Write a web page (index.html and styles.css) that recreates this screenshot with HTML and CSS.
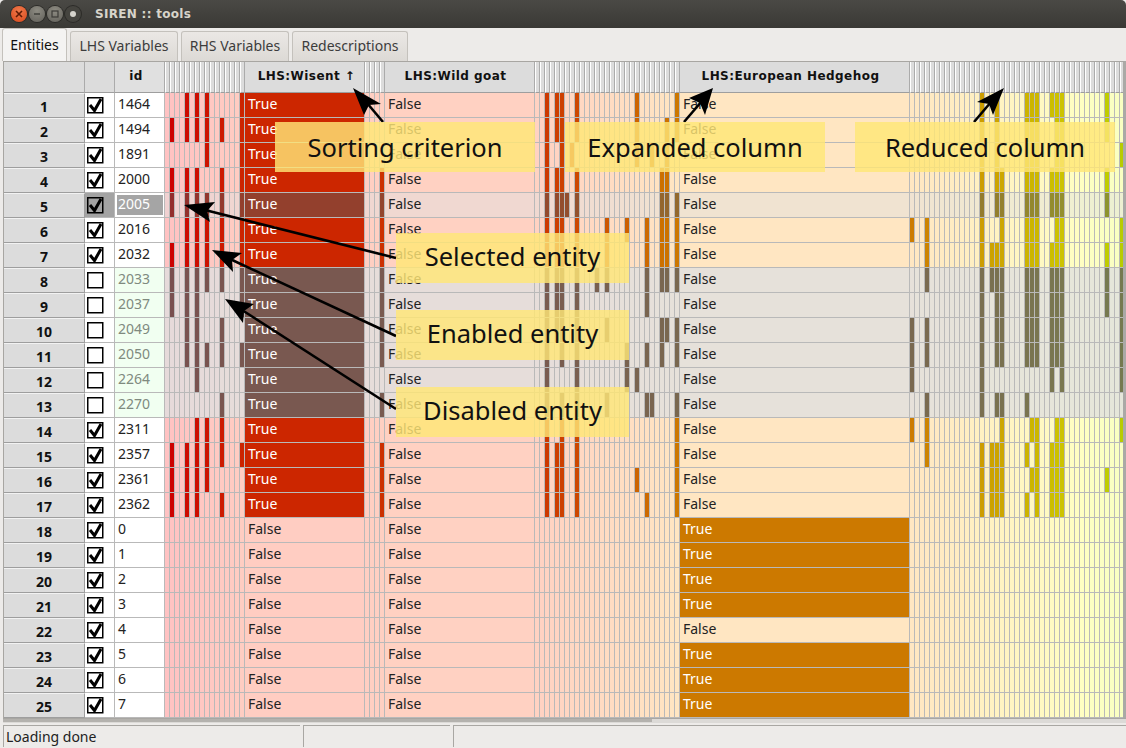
FILE: index.html
```html
<!DOCTYPE html>
<html>
<head>
    <meta charset="UTF-8">
    <title>SIREN :: tools</title>
    <link rel="stylesheet" href="styles.css">
</head>
<body>
    <div class="titlebar">
        <div class="winbtn close"><svg width="8" height="8" viewBox="0 0 8 8"><path d="M1 1L7 7M7 1L1 7" stroke="#5e1a05" stroke-width="1.6"/></svg></div>
        <div class="winbtn"><svg width="8" height="8" viewBox="0 0 8 8"><path d="M1 4H7" stroke="#3c3b37" stroke-width="1.4"/></svg></div>
        <div class="winbtn"><svg width="8" height="8" viewBox="0 0 8 8"><rect x="1" y="1" width="6" height="6" fill="none" stroke="#3c3b37" stroke-width="1.2"/></svg></div>
        <div class="winbtn sticky"><span></span></div>
        <div class="wintitle">SIREN :: tools</div>
    </div>

    <div class="tabs">
        <div class="tab active">Entities</div>
        <div class="tab">LHS Variables</div>
        <div class="tab">RHS Variables</div>
        <div class="tab">Redescriptions</div>
    </div>

    <div class="pane">
        <div class="grid" id="grid"></div>
    </div>
    <div class="hscroll"><div class="hthumb"></div></div>

    <div class="statusbar">
        <div class="statuscell first">Loading done</div>
        <div class="statuscell second"></div>
        <div class="statuscell third"></div>
    </div>

    <!-- annotations drawn over the screenshot -->
    <svg class="arrows" width="1126" height="748" viewBox="0 0 1126 748">
        <g stroke="#000" stroke-width="2.6">
            <line x1="383" y1="122" x2="367" y2="103"/>
            <line x1="684" y1="122" x2="702" y2="101"/>
            <line x1="974" y1="122" x2="991" y2="102"/>
            <line x1="396" y1="258" x2="205" y2="210"/>
            <line x1="396" y1="336" x2="230" y2="259"/>
            <line x1="396" y1="409" x2="242" y2="310"/>
        </g>
        <polygon points="353,88 381,104 369,105 364,115"/>
        <polygon points="713,88 705,115 700,103 689,98"/>
        <polygon points="1004,88 993,115 989,104 977,102"/>
        <polygon points="184,205 215,202 207,211 210,222"/>
        <polygon points="212,250 242,253 232,260 233,272"/>
        <polygon points="225,299 254,304 244,311 243,323"/>
    </svg>
    <div class="note sorting">Sorting criterion</div>
    <div class="note expanded">Expanded column</div>
    <div class="note reduced">Reduced column</div>
    <div class="note selected">Selected entity</div>
    <div class="note enabled">Enabled entity</div>
    <div class="note disabled">Disabled entity</div>

    <script src="script.js"></script>
</body>
</html>
```

FILE: styles.css
```css
* {
    box-sizing: border-box;
}
html, body {
    margin: 0;
    height: 100%;
    overflow: hidden;
}
body {
    width: 1126px;
    height: 748px;
    display: flex;
    flex-direction: column;
    position: relative;
    background-color: #edebe9;
    font-family: "Noto Sans", sans-serif;
    font-size: 14px;
    color: #222;
}

/* Window title */
.titlebar {
    height: 28px;
    flex: none;
    display: flex;
    align-items: center;
    padding-left: 11px;
    gap: 2px;
    background: linear-gradient(#4a4945, #3a3935);
    border-radius: 5px 5px 0 0;
}
.winbtn {
    width: 16px;
    height: 16px;
    border-radius: 50%;
    display: flex;
    align-items: center;
    justify-content: center;
    background: radial-gradient(circle at 50% 30%, #8d8b82, #62605a);
    box-shadow: 0 0 0 1px #2c2b28;
}
.winbtn.close {
    background: radial-gradient(circle at 50% 30%, #f0794a, #d9481c);
}
.winbtn.sticky {
    background: #45443f;
}
.winbtn.sticky span {
    width: 6px;
    height: 6px;
    border-radius: 50%;
    background: #d5d3cc;
}
.wintitle {
    margin-left: 12px;
    font-family: "DejaVu Sans", sans-serif;
    font-weight: bold;
    font-size: 12px;
    letter-spacing: 0.3px;
    color: #d8d4ca;
}

/* Tabs */
.tabs {
    height: 33px;
    flex: none;
    display: flex;
    align-items: flex-end;
    gap: 3px;
    padding-left: 2px;
}
.tab {
    height: 30px;
    padding-top: 4px;
    text-align: center;
    background: linear-gradient(#ebe8e5, #dcd9d5);
    border: 1px solid #c4c1bc;
    border-bottom: 0;
    border-radius: 3px 3px 0 0;
    color: #3c3c3c;
    width: 108px;
}
.tab:nth-child(4) {
    width: 116px;
}
.tab.active {
    width: 65px;
    height: 33px;
    padding-top: 6px;
    background: #f4f3f2;
    color: #111;
}

/* Table */
.pane {
    height: 657px;
    flex: none;
    margin-left: 3px;
    border-top: 1px solid #a8a6a2;
    border-left: 1px solid #a8a6a2;
    border-right: 3px solid #aaa9a6;
    background: #fff;
    overflow: hidden;
}
.grid {
    width: 1200px;
}
.row {
    display: flex;
    height: 25px;
}
.row.head {
    height: 31px;
}
.cell {
    flex: none;
    height: 100%;
    padding-left: 3px;
    border-right: 1px solid #b9b9b9;
    border-bottom: 1px solid #b9b9b9;
    line-height: 22px;
    white-space: nowrap;
    overflow: hidden;
}
.rownum {
    width: 81px;
    padding-top: 1px;
    line-height: 24px;
    text-align: center;
    font-weight: bold;
    font-size: 14px;
    color: #111;
    background: #dcdcdc;
    border-top: 1px solid #f2f2f2;
    border-right: 1px solid #9e9e9e;
    border-bottom: 1px solid #9e9e9e;
}
.check {
    width: 30px;
    padding: 4px 0 0 2px;
    background: #fff;
}
.id {
    width: 50px;
    background: #fff;
}
.wide1 {
    width: 120px;
}
.wide2 {
    width: 150px;
}
.wide3 {
    width: 230px;
}
.thin {
    width: 5px;
    padding: 0;
}

/* hue-driven colours, the hue comes from the column position */
.val {
    background-color: hsl(var(--h), 100%, 88%);
}
.val.on {
    background-color: hsl(var(--h), 100%, 40%);
    color: #fff;
}
.row.off .val {
    background-color: color-mix(in srgb, hsl(var(--h), 100%, 88%) 20%, #e0e0e0);
}
.row.off .val.on {
    background-color: color-mix(in srgb, hsl(var(--h), 100%, 40%) 20%, #646464);
}
.row.sel .val {
    background-color: color-mix(in srgb, hsl(var(--h), 100%, 88%) 50%, #e0e0e0);
}
.row.sel .val.on {
    background-color: color-mix(in srgb, hsl(var(--h), 100%, 40%) 50%, #5a5a5a);
}
.row.off .id {
    background: #f1fff1;
    color: #7f8a7f;
}
.row.sel .check {
    background: #a3a3a3;
}
.idbox {
    display: block;
    margin: 2px 1px 0 -1px;
    padding-left: 1px;
    height: 20px;
    line-height: 18px;
    background: #a5a5a5;
    color: #fff;
}

.box {
    display: block;
}

/* Header row */
.hcell {
    height: 100%;
    flex: none;
    text-align: center;
    font-family: "DejaVu Sans", sans-serif;
    font-weight: bold;
    font-size: 12px;
    letter-spacing: 0.45px;
    line-height: 29px;
    color: #111;
    background: #dcdcdc;
    border-right: 1px solid #ababab;
    border-bottom: 1px solid #9e9e9e;
}
.hcell.wide1 {
    padding-left: 4px;
}
.hcell.wide2, .hcell.wide3 {
    padding-right: 8px;
}
.hcell.num {
    width: 81px;
}
.hcell.chk {
    width: 30px;
}
.hcell.idh {
    width: 50px;
    padding-right: 7px;
    background: #e0e0e0;
}
.hcell.thinh {
    width: 5px;
    border-left: 1px solid #fff;
}

/* Bottom of the window */
.hscroll {
    height: 5px;
    flex: none;
    margin-left: 3px;
    background: #dcdad7;
    border-top: 1px solid #a8a6a2;
}
.hthumb {
    width: 649px;
    height: 3px;
    background: #b4b2ae;
}
.statusbar {
    height: 24px;
    flex: none;
    display: flex;
    gap: 3px;
    padding: 2px 0 0 3px;
}
.statuscell {
    height: 22px;
    padding-left: 2px;
    line-height: 22px;
    border-top: 1px solid #a9a7a3;
    border-left: 1px solid #a9a7a3;
    color: #222;
}
.statuscell.first {
    width: 297px;
}
.statuscell.second {
    width: 147px;
}
.statuscell.third {
    flex: 1;
}

/* Annotations over the table */
.arrows {
    position: absolute;
    left: 0;
    top: 0;
}
.note {
    position: absolute;
    height: 50px;
    line-height: 50px;
    text-align: center;
    font-size: 25.5px;
    color: #111;
    background-color: rgba(255, 230, 118, 0.82);
}
.sorting, .expanded, .reduced {
    top: 122px;
    width: 260px;
}
.sorting {
    left: 275px;
}
.expanded {
    left: 565px;
}
.reduced {
    left: 855px;
}
.selected, .enabled, .disabled {
    left: 396px;
    width: 233px;
    line-height: 46px;
}
.selected {
    top: 233px;
}
.enabled {
    top: 310px;
}
.disabled {
    top: 387px;
}
```

FILE: script.js
```js
// Table content, bars are listed per row as the columns which are true
var ids = [1464, 1494, 1891, 2000, 2005, 2016, 2032, 2033, 2037, 2049, 2050, 2264, 2270, 2311, 2357, 2361, 2362, 0, 1, 2, 3, 4, 5, 6, 7];

var groupA = [
    [4, 6, 8, 15], [1, 4, 6, 8, 11, 15], [8, 15], [1, 4, 6, 11, 15],
    [1, 4, 6, 8, 11, 15], [4, 6, 8, 11, 15], [1, 4, 6, 8, 11, 15], [1, 4, 6, 8, 11, 15],
    [1, 4, 6, 15], [4, 6, 11], [4, 6, 8, 11, 15], [6], [11],
    [6, 8, 11], [1, 4, 6, 8, 11, 15], [1, 4, 6, 8], [1, 4, 6, 11]
];
var groupB = [
    [], [], [], [3], [3], [3], [3], [3], [3], [3], [3], [], [3], [], [3], [3], [3]
];
var groupC = [
    [2, 4, 5, 8, 20, 28], [2, 4, 5, 8, 20, 26, 28], [2, 5, 7, 20, 23, 26], [2, 4, 5, 8, 25, 26],
    [2, 4, 5, 6, 8, 25, 26, 28], [2, 4, 5, 8, 14, 18, 22, 25, 26, 28], [2, 4, 5, 8, 14, 22, 25, 26, 28], [2, 4, 5, 8, 12, 14, 22, 25, 26, 28],
    [2, 4, 5, 8, 22], [2, 4, 5, 8, 14, 25, 26, 28], [2, 5, 8, 18, 22, 25, 28], [2, 8, 18, 20], [2, 5, 8, 14, 22, 23, 28],
    [2, 5, 8, 28], [2, 4, 5, 8, 28], [2, 4, 5, 8, 20, 28], [2, 4, 5, 8, 22, 28]
];
var groupD = [
    [14, 17, 23, 24, 25, 28, 29, 30, 39], [14, 17, 23, 24, 25, 29, 30, 39], [14, 17, 23, 24, 25, 29, 30, 42],
    [14, 17, 18, 23, 24, 25, 28, 29, 30, 39], [14, 17, 18, 23, 24, 25, 28, 29, 30, 39],
    [0, 3, 14, 18, 23, 24, 25, 29, 30, 42], [3, 14, 16, 17, 18, 23, 24, 25, 28, 29, 30, 39, 42],
    [3, 14, 16, 17, 18, 23, 24, 25, 28, 29, 30, 39, 42], [14, 17, 18, 23, 24, 25, 28, 29, 30, 39, 42],
    [0, 3, 14, 17, 18, 23, 24, 25, 28, 29, 30, 42], [0, 3, 14, 17, 18, 23, 24, 25, 28, 29, 30, 42],
    [0, 14, 28, 30, 42], [3, 14, 17, 18, 23], [0, 3, 18, 24, 25, 29, 30, 42],
    [3, 14, 16, 17, 18, 23, 25, 28, 29, 30], [14, 16, 17, 18, 24, 25, 28, 29, 30, 39], [14, 16, 17, 18, 23, 25, 28, 29, 30]
];

var checked = '<svg class="box" width="17" height="17" viewBox="0 0 17 17"><rect x="0.75" y="0.75" width="15" height="15" fill="#fff" stroke="#000" stroke-width="1.5"/><path d="M3 8L7.5 13.5L14 2" fill="none" stroke="#000" stroke-width="3"/></svg>';
var checkedSel = checked.replace('#fff', '#a3a3a3');
var empty = '<svg class="box" width="17" height="17" viewBox="0 0 17 17"><rect x="0.75" y="0.75" width="15" height="15" fill="#fff" stroke="#000" stroke-width="1.5"/></svg>';

// one hue step per column, red on the left to green-yellow on the right
var hueStep = 0.7;

function thinCells(count, start, bars) {
    var html = '';
    for (var i = 0; i < count; i++) {
        var on = bars.indexOf(i) >= 0 ? ' on' : '';
        html += '<div class="cell thin val' + on + '" style="--h:' + ((start + i) * hueStep).toFixed(1) + '"></div>';
    }
    return html;
}

function wideCell(cls, index, isTrue) {
    var on = isTrue ? ' on' : '';
    return '<div class="cell val ' + cls + on + '" style="--h:' + (index * hueStep).toFixed(1) + '">' + (isTrue ? 'True' : 'False') + '</div>';
}

function thinHeads(count) {
    var html = '';
    for (var i = 0; i < count; i++) {
        html += '<div class="hcell thinh"></div>';
    }
    return html;
}

var html = '<div class="row head"><div class="hcell num"></div><div class="hcell chk"></div><div class="hcell idh">id</div>' +
    thinHeads(16) + '<div class="hcell wide1">LHS:Wisent ↑</div>' +
    thinHeads(4) + '<div class="hcell wide2">LHS:Wild goat</div>' +
    thinHeads(29) + '<div class="hcell wide3">LHS:European Hedgehog</div>' +
    thinHeads(43) + '</div>';

ids.forEach(function (id, r) {
    var off = r >= 7 && r <= 12;
    var sel = r === 4;
    var stateCls = off ? ' off' : (sel ? ' sel' : '');
    var box = off ? empty : (sel ? checkedSel : checked);
    var idText = sel ? '<span class="idbox">' + id + '</span>' : id;

    html += '<div class="row' + stateCls + '">';
    html += '<div class="rownum">' + (r + 1) + '</div>';
    html += '<div class="cell check">' + box + '</div>';
    html += '<div class="cell id">' + idText + '</div>';
    html += thinCells(16, 0, groupA[r] || []);
    html += wideCell('wide1', 16, r < 17);
    html += thinCells(4, 17, groupB[r] || []);
    html += wideCell('wide2', 21, false);
    html += thinCells(29, 22, groupC[r] || []);
    html += wideCell('wide3', 51, r >= 17 && r !== 21);
    html += thinCells(43, 52, groupD[r] || []);
    html += '</div>';
});

document.getElementById('grid').innerHTML = html;
```
